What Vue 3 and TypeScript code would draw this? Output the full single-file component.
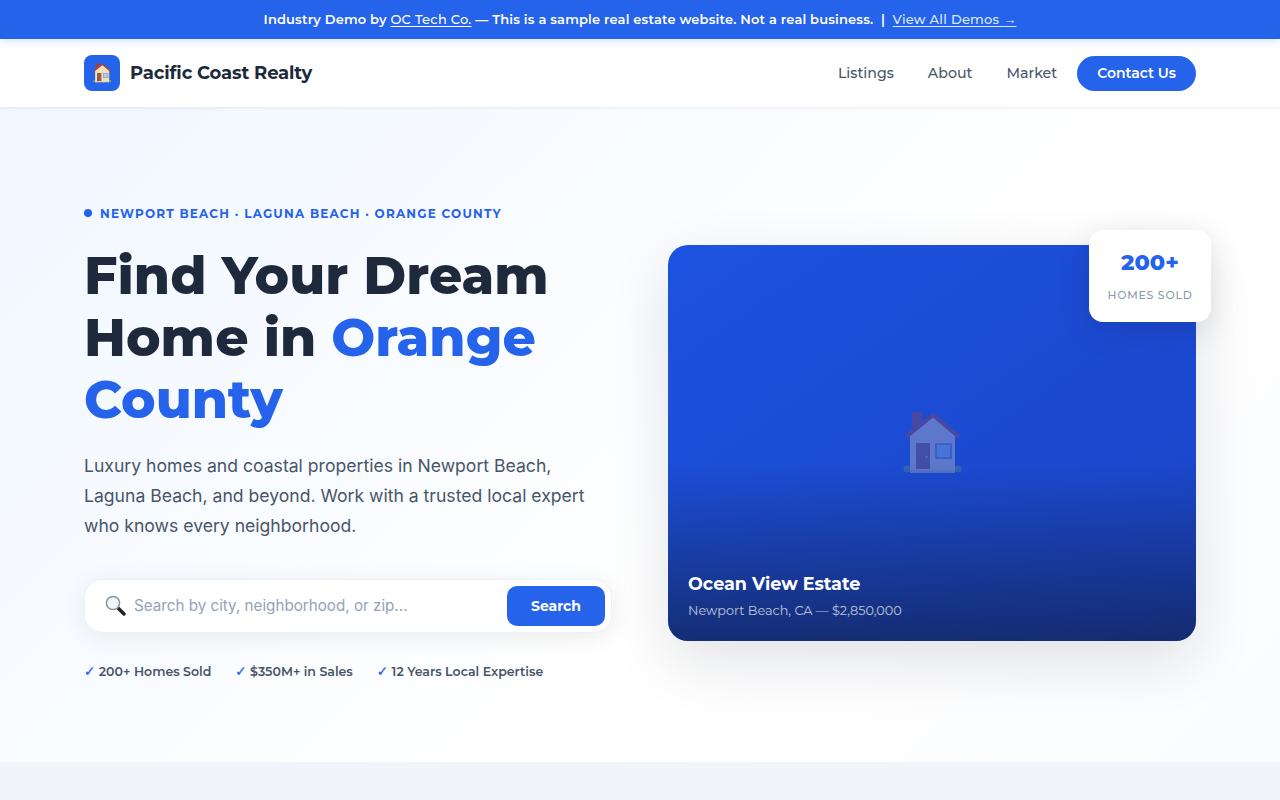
<script setup lang="ts">
const checks: string[] = ['200+ Homes Sold', '$350M+ in Sales', '12 Years Local Expertise']
</script>

<template>
  <div class="page">
    <svg class="defs" aria-hidden="true">
      <symbol id="house" viewBox="0 0 64 64">
        <rect x="12" y="1" width="10" height="16" fill="#a8402f" />
        <circle cx="7" cy="58" r="3.500" fill="#6fa06a" />
        <circle cx="58" cy="58" r="3.500" fill="#6fa06a" />
        <path d="M10 25 33 6 55 25V61H10Z" fill="#f6dfbb" />
        <path d="M7 25 33 4 58 25" fill="none" stroke="#b3432f" stroke-width="4" stroke-linejoin="round" stroke-linecap="round" />
        <rect x="16" y="32" width="14" height="26" fill="#9a5a4a" />
        <circle cx="26.500" cy="46" r="1.100" fill="#f3d27a" />
        <rect x="35" y="32" width="17" height="16" fill="#8a95a0" />
        <rect x="37" y="34" width="13" height="12" fill="#a9d3ea" />
        <rect x="10" y="59" width="45" height="3" fill="#d9c8ab" />
      </symbol>
    </svg>
    <div class="banner">Industry Demo by <a class="blink">OC Tech Co.</a> — This is a sample real estate website. Not a real business. &nbsp;|&nbsp; <a class="blink light">View All Demos <span class="arrow">→</span></a></div>
    <header class="nav">
      <div class="brand">
        <span class="logo"><svg class="logo-house"><use href="#house" /></svg></span>
        <span class="bname">Pacific Coast Realty</span>
      </div>
      <nav class="links">
        <a class="lnk">Listings</a><a class="lnk">About</a><a class="lnk">Market</a>
        <a class="contact">Contact Us</a>
      </nav>
    </header>
    <section class="hero">
      <div class="left">
        <div class="eyebrow"><i class="dot"></i>NEWPORT BEACH · LAGUNA BEACH · ORANGE COUNTY</div>
        <h1>Find Your Dream Home in <em>Orange County</em></h1>
        <p class="lead">Luxury homes and coastal properties in Newport Beach, Laguna Beach, and beyond. Work with a trusted local expert who knows every neighborhood.</p>
        <div class="search">
          <svg class="sicon" viewBox="0 0 21 21">
            <path d="M13 13 19 19" stroke="#1f2326" stroke-width="3.400" stroke-linecap="round" />
            <circle cx="8" cy="8" r="6.600" fill="#f2f6f8" stroke="#8b9398" stroke-width="1.500" />
          </svg>
          <span class="ph">Search by city, neighborhood, or zip...</span>
          <button class="sbtn">Search</button>
        </div>
        <div class="checks">
          <span v-for="c in checks" :key="c" class="check"><b>✓</b> {{ c }}</span>
        </div>
      </div>
      <div class="card">
        <svg class="hero-house"><use href="#house" /></svg>
        <div class="caption">
          <div class="ctitle">Ocean View Estate</div>
          <div class="csub">Newport Beach, CA — $2,850,000</div>
        </div>
        <div class="badge">
          <div class="bnum">200+</div>
          <div class="blabel">HOMES SOLD</div>
        </div>
      </div>
    </section>
    <div class="next"></div>
  </div>
</template>

<style>
html, body { margin: 0; background: #fff; overflow: hidden; }
</style>

<style scoped>
.defs { position: absolute; width: 0; height: 0; }
.page { height: 800px; overflow: hidden; font-family: Inter, sans-serif; color: #1e293b; display: flex; flex-direction: column; }
.banner { height: 39px; line-height: 39px; flex: none; text-align: center; background: #2563eb; color: #fff; font-family: Montserrat, Inter, sans-serif; font-size: 13px; font-weight: 600; letter-spacing: .17px; box-shadow: 0 2px 8px rgba(37,99,235,.18); position: relative; z-index: 2; }
.blink { text-decoration: underline; text-underline-offset: 2px; font-weight: 500; letter-spacing: .26px; }
.light { color: #dbeafe; }
.arrow { font-family: "Liberation Sans", sans-serif; }
.nav { height: 68px; flex: none; background: #fff; display: flex; align-items: center; justify-content: space-between; padding: 0 84px; box-shadow: 0 1px 3px rgba(0,0,0,.08); position: relative; z-index: 1; }
.brand { display: flex; align-items: center; gap: 10px; }
.logo { width: 36px; height: 36px; border-radius: 8px; background: #2563eb; display: flex; align-items: center; justify-content: center; }
.logo-house { width: 20px; height: 20px; }
.bname { font-family: Montserrat, Inter, sans-serif; font-weight: 700; font-size: 18px; letter-spacing: -.15px; }
.links { display: flex; align-items: center; gap: 20px; }
.lnk { font-family: Montserrat, Inter, sans-serif; font-weight: 500; font-size: 14.2px; color: #475569; padding: 0 0 0 14px; }
.contact { background: #2563eb; color: #fff; font-family: Montserrat, Inter, sans-serif; font-weight: 600; font-size: 14px; height: 35px; padding: 0 20px; border-radius: 18px; display: flex; align-items: center; }
.hero { flex: 1; background: linear-gradient(135deg, #f0f7ff 0%, #fff 60%, #fbfcfe 100%); display: grid; grid-template-columns: 1fr 1fr; gap: 56px; padding: 16px 84px 0; align-items: center; }
.left { padding-bottom: 1px; }
.eyebrow { display: flex; align-items: center; gap: 8px; font-family: Montserrat, Inter, sans-serif; font-size: 12px; font-weight: 700; letter-spacing: 1.2px; color: #2563eb; margin-bottom: 24px; }
.dot { width: 8px; height: 8px; border-radius: 50%; background: #2563eb; }
h1 { margin: 0 0 20px; font-family: Montserrat, Inter, sans-serif; font-size: 52px; line-height: 62px; font-weight: 800; color: #1e293b; }
h1 em { font-style: normal; color: #2563eb; }
.lead { margin: 0 0 38px; font-size: 17.6px; line-height: 30px; color: #475569; }
.search { height: 54px; box-sizing: border-box; border: 1px solid #edf1f6; border-radius: 18px; background: #fff; display: flex; align-items: center; padding: 0 6px 0 20px; box-shadow: 0 4px 24px rgba(0,0,0,.08); margin-bottom: 30px; }
.sicon { width: 21px; height: 21px; margin-right: 8px; }
.ph { flex: 1; font-size: 15.2px; color: #94a3b8; }
.sbtn { border: 0; background: #2563eb; color: #fff; height: 40px; width: 98px; border-radius: 10px; font-family: Montserrat, Inter, sans-serif; font-weight: 700; font-size: 14px; }
.checks { display: flex; gap: 24px; }
.check { font-family: Montserrat, Inter, sans-serif; font-size: 12.55px; font-weight: 600; color: #475569; }
.check b { color: #2563eb; font-weight: 400; font-size: 13.5px; font-family: "DejaVu Sans", sans-serif; -webkit-text-stroke: .3px #2563eb; }
.card { position: relative; height: 396px; border-radius: 20px; background: linear-gradient(145deg, #1d52e0, #1a44c6); box-shadow: 0 20px 60px rgba(15,23,42,.12); display: flex; align-items: center; justify-content: center; }
.hero-house { width: 64px; height: 64px; opacity: .3; }
.caption { position: absolute; left: 0; right: 0; bottom: 0; padding: 110px 20px 23px; border-radius: 0 0 20px 20px; background: linear-gradient(transparent, rgba(15,23,42,.55)); color: #fff; }
.ctitle { font-family: Montserrat, Inter, sans-serif; font-size: 17.6px; font-weight: 700; }
.csub { font-family: Montserrat, Inter, sans-serif; font-size: 12.8px; opacity: .7; margin-top: 9px; }
.badge { position: absolute; top: -15px; right: -15px; width: 122px; height: 92px; box-sizing: border-box; padding-bottom: 2px; border-radius: 14px; background: #fff; box-shadow: 0 8px 32px rgba(0,0,0,.12); display: flex; flex-direction: column; align-items: center; justify-content: center; }
.bnum { font-family: Montserrat, Inter, sans-serif; font-weight: 800; font-size: 22.4px; color: #2563eb; }
.blabel { font-family: Montserrat, Inter, sans-serif; font-size: 11px; font-weight: 500; letter-spacing: .75px; color: #8d99ab; margin-top: 12px; }
.next { height: 38px; flex: none; background: #f1f5f9; }
</style>
